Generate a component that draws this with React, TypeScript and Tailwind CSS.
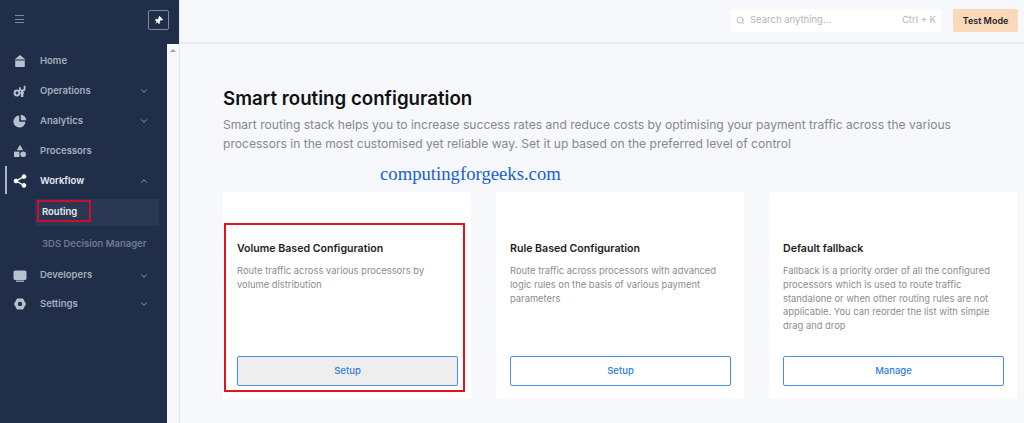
import React from 'react';
import { Search, ChevronDown, ChevronUp, Pin } from 'lucide-react';

// sidebar glyphs, drawn to match the filled icons in the reference
const HomeIcon = () => (
  <svg viewBox="0 0 14 14" width="14" height="14" fill="currentColor">
    <path d="M7 1 L12.5 5.4 H1.5 Z" />
    <path d="M2.2 6.4 H11.8 V12.2 Q11.8 13 11 13 H3 Q2.2 13 2.2 12.2 Z" />
  </svg>
);
const OperationsIcon = () => (
  <svg viewBox="0 0 14 14" width="14" height="14" fill="none" stroke="currentColor">
    <circle cx="4" cy="9" r="2.4" strokeWidth="2" />
    <path d="M6.8 3.2 V4.8 Q6.8 6.4 8.4 6.4 H10 Q11.6 6.4 11.6 4.8 V1.8" strokeWidth="1.8" />
    <path d="M9.2 6.4 V13" strokeWidth="2.4" />
    <path d="M6.8 9 H11" strokeWidth="1.4" />
  </svg>
);
const AnalyticsIcon = () => (
  <svg viewBox="0 0 14 14" width="14" height="14" fill="currentColor">
    <path d="M6.2 1.6 V7.8 H12.4 A6 6 0 1 1 6.2 1.6 Z" />
    <path d="M7.8 0.8 A5.6 5.6 0 0 1 13.2 6.2 H7.8 Z" />
  </svg>
);
const ProcessorsIcon = () => (
  <svg viewBox="0 0 14 14" width="14" height="14" fill="currentColor">
    <path d="M7 0.8 L10.2 6.2 H3.8 Z" />
    <rect x="1" y="7.6" width="5.4" height="5.4" />
    <circle cx="10.2" cy="10.3" r="2.8" />
  </svg>
);
const WorkflowIcon = () => (
  <svg viewBox="0 0 14 14" width="14" height="14" fill="currentColor" stroke="currentColor">
    <path d="M11 2.6 L3 7 L11 11.4" fill="none" strokeWidth="1.3" />
    <circle cx="3" cy="7" r="1.9" />
    <circle cx="11" cy="2.6" r="1.9" />
    <circle cx="11" cy="11.4" r="1.9" />
  </svg>
);
const DevelopersIcon = () => (
  <svg viewBox="0 0 14 14" width="14" height="14" fill="currentColor">
    <rect x="0.5" y="1.5" width="13" height="9.5" rx="1.6" />
    <rect x="3" y="11.6" width="8" height="1.2" />
  </svg>
);
const SettingsIcon = () => (
  <svg viewBox="0 0 14 14" width="14" height="14" fill="currentColor" fillRule="evenodd">
    <path d="M4 1.4 H10 L13 7 L10 12.6 H4 L1 7 Z M7 4.8 A2.2 2.2 0 1 0 7 9.2 A2.2 2.2 0 1 0 7 4.8 Z" />
  </svg>
);

function NavItem({ label, icon, chevron, active, h }: { label: string; icon: React.ReactNode; chevron?: boolean; active?: boolean; h: string }) {
  return (
    <div className={`flex items-center pl-[13px] pr-[18px] ${h} relative`}>
      {active && <div className="absolute left-[5px] top-[0px] w-[1.5px] h-[28px] bg-[#a9b4c6]" />}
      <div className={`w-[14px] h-[14px] flex items-center justify-center ${active ? 'text-white' : 'text-[#b6c0cf]'}`}>{icon}</div>
      <span className={`ml-[13px] flex-1 text-[9.5px] font-semibold ${active ? 'text-[#e8ecf2]' : 'text-[#a3aebf]'}`}>{label}</span>
      {chevron && (active ? <ChevronUp size={10} className="text-[#a3aebf]" /> : <ChevronDown size={10} className="text-[#a3aebf]" />)}
    </div>
  );
}

function Card({ title, text, action, pressed }: { title: string; text: string; action: string; pressed?: boolean }) {
  return (
    <div className="w-[248px] h-[207px] bg-white rounded-[2px] pt-[49px] px-[14px] pb-[13px] flex flex-col">
      <h3 className="text-[10.6px] leading-[15px] font-semibold text-[#1c1c1e]">{title}</h3>
      <p className="mt-[8px] text-[9.4px] leading-[13.8px] text-[#8a8d93] flex-1">{text}</p>
      <button className={`h-[30px] w-[221px] rounded-[2px] border border-[#4a8fe6] text-[9.5px] font-medium text-[#2f7de1] ${pressed ? 'bg-[#eeeeee]' : 'bg-white'}`}>
        {action}
      </button>
    </div>
  );
}

export default function App() {
  return (
    <div className="relative flex w-[1024px] h-[423px] overflow-hidden bg-[#f6f8fb] font-['Inter',sans-serif]">
      {/* Sidebar */}
      <aside className="w-[180px] shrink-0 flex flex-col border-r border-[#e3e6ea]">
        <div className="h-[44px] bg-[#212e4a] flex items-center justify-between pl-[15px] pr-[10px]">
          <div className="flex flex-col gap-[2.5px] mt-[-6px]">
            <div className="w-[9px] h-[1px] bg-[#7d89a0]" />
            <div className="w-[9px] h-[1px] bg-[#7d89a0]" />
            <div className="w-[9px] h-[1px] bg-[#7d89a0]" />
          </div>
          <div className="w-[21px] h-[20px] mt-[-4px] rounded-[2px] border border-[#7d89a0] flex items-center justify-center">
            <Pin size={9} className="text-white fill-white rotate-45" />
          </div>
        </div>
        <div className="flex-1 flex">
          <nav className="w-[167px] bg-[#212e4a] flex flex-col">
            <div className="h-[2px]" />
            <NavItem h="h-[30px]" label="Home" icon={<HomeIcon />} />
            <NavItem h="h-[30px]" label="Operations" chevron icon={<OperationsIcon />} />
            <NavItem h="h-[30px]" label="Analytics" chevron icon={<AnalyticsIcon />} />
            <NavItem h="h-[30px]" label="Processors" icon={<ProcessorsIcon />} />
            <NavItem h="h-[30px]" label="Workflow" chevron active icon={<WorkflowIcon />} />
            <div className="mt-[3px] ml-[35px] mr-[8px] h-[27px] bg-[#2b3854] flex items-center pl-[7px] text-[9.5px] font-semibold text-[#e8ecf2]">Routing</div>
            <div className="h-[36px] flex items-center pl-[42px] text-[9.5px] font-semibold text-[#6d7a93]">3DS Decision Manager</div>
            <NavItem h="h-[27px]" label="Developers" chevron icon={<DevelopersIcon />} />
            <NavItem h="h-[30px]" label="Settings" chevron icon={<SettingsIcon />} />
          </nav>
          <div className="flex-1 bg-[#f7f8fa] flex justify-center pt-[5px]">
            <div className="w-0 h-0 border-x-[3px] border-x-transparent border-b-[3px] border-b-[#a0a0a0]" />
          </div>
        </div>
      </aside>

      <main className="flex-1 flex flex-col min-w-0">
        {/* Top bar */}
        <header className="h-[44px] shrink-0 border-b-2 border-[#e8eaed] flex justify-end items-start pt-[9px] pr-[6px] gap-[12px]">
          <div className="w-[210px] h-[23px] bg-white rounded-[2px] flex items-center pl-[5px] pr-[5px]">
            <Search size={9} className="text-[#a0a4aa]" />
            <span className="ml-[5px] flex-1 text-[9.5px] text-[#b4b7bc]">Search anything...</span>
            <span className="text-[9.5px] text-[#b4b7bc]">Ctrl + K</span>
          </div>
          <div className="w-[65px] h-[23px] bg-[#fad9bb] rounded-[2px] flex items-center justify-center text-[9px] font-semibold text-[#1f1f1f]">Test Mode</div>
        </header>

        <div className="pl-[43px] pr-[6px] pt-[43px]">
          <h1 className="text-[18.7px] leading-[24px] font-semibold text-[#111111]">Smart routing configuration</h1>
          <p className="mt-[5px] w-[740px] text-[12.08px] leading-[18.5px] text-[#85888d]">
            Smart routing stack helps you to increase success rates and reduce costs by optimising your payment traffic across the various processors in the most customised yet reliable way. Set it up based on the preferred level of control
          </p>
          <div className="mt-[39px] flex gap-[25px]">
            <Card title="Volume Based Configuration" text="Route traffic across various processors by volume distribution" action="Setup" pressed />
            <Card title="Rule Based Configuration" text="Route traffic across processors with advanced logic rules on the basis of various payment parameters" action="Setup" />
            <Card title="Default fallback" text="Fallback is a priority order of all the configured processors which is used to route traffic standalone or when other routing rules are not applicable. You can reorder the list with simple drag and drop" action="Manage" />
          </div>
        </div>
      </main>

      {/* Screenshot annotations */}
      <div className="absolute left-[37px] top-[200px] w-[54px] h-[22px] border-2 border-[#c8102e]" />
      <div className="absolute left-[224px] top-[223px] w-[241px] h-[169px] border-2 border-[#e3121f]" />
      <div className="absolute left-[380px] top-[162px] font-['Liberation_Serif',serif] text-[18.7px] leading-[24px] text-[#1a5fd0]">computingforgeeks.com</div>
    </div>
  );
}
